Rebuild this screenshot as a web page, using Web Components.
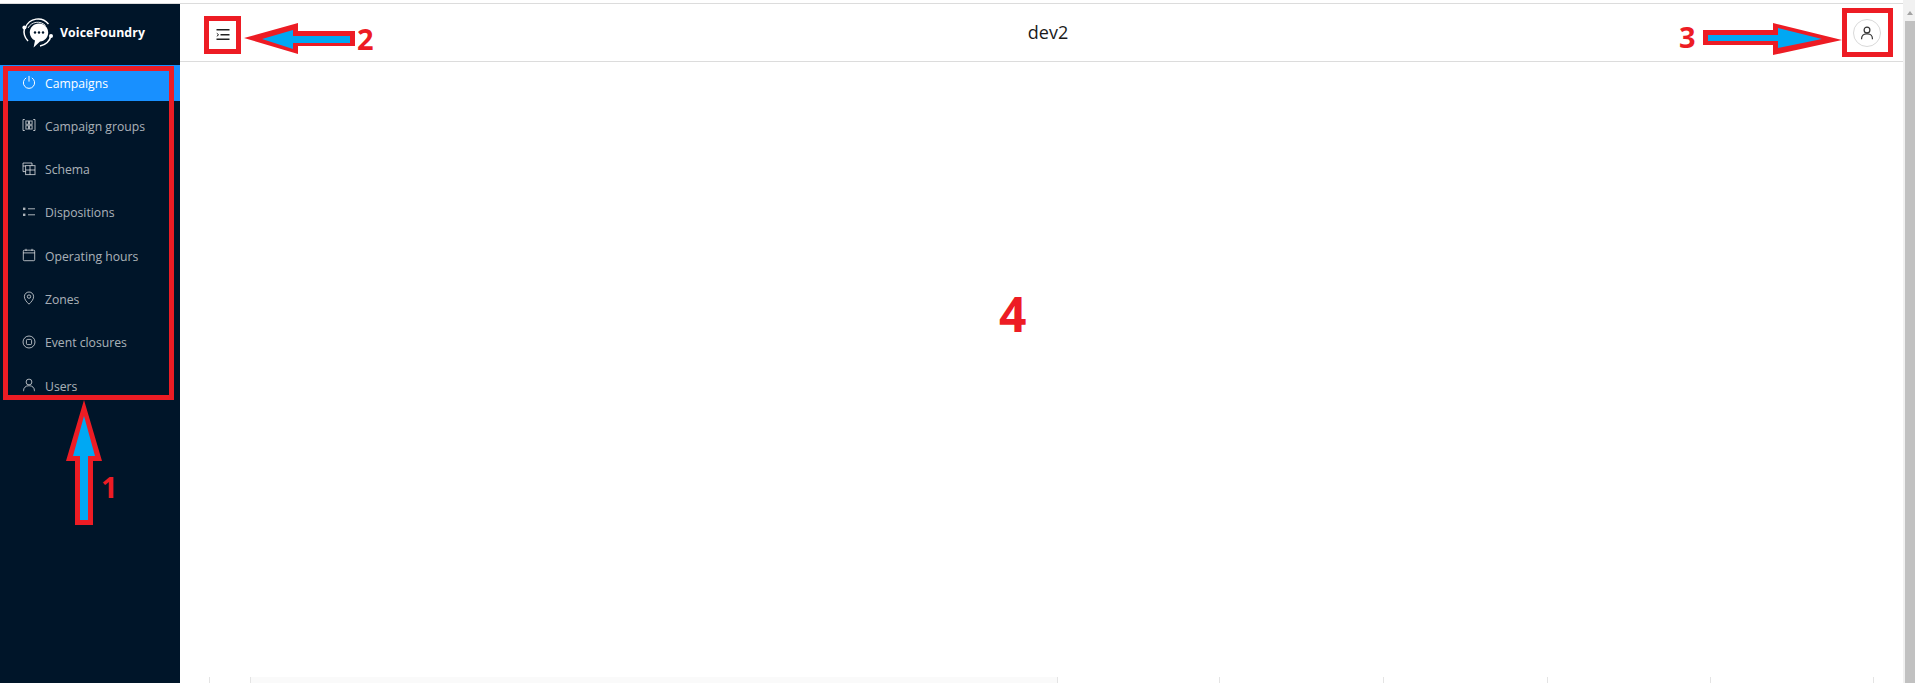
<!DOCTYPE html>
<html lang="en">
<head>
<meta charset="utf-8">
<title>VoiceFoundry</title>
<style>
html,body{margin:0;padding:0;height:683px;overflow:hidden;background:#fff;font-family:"Open Sans","Liberation Sans",sans-serif}
</style>
</head>
<body>
<vf-app>
  <vf-sidebar slot="sidebar">
    <vf-item label="Campaigns" icon="power" active></vf-item>
    <vf-item label="Campaign groups" icon="group"></vf-item>
    <vf-item label="Schema" icon="schema"></vf-item>
    <vf-item label="Dispositions" icon="list"></vf-item>
    <vf-item label="Operating hours" icon="calendar"></vf-item>
    <vf-item label="Zones" icon="pin"></vf-item>
    <vf-item label="Event closures" icon="target"></vf-item>
    <vf-item label="Users" icon="user"></vf-item>
  </vf-sidebar>
  <vf-header slot="header" title="dev2"></vf-header>
  <vf-table-edge slot="content"></vf-table-edge>
</vf-app>
<vf-annotations></vf-annotations>
<script>
const ICONS = {
  power:'<path d="M4.2 2.9A5.6 5.6 0 1 0 9.8 2.9M7 .9V6.6"/>',
  group:'<path d="M2.8 1.5H1v11h1.8M11.2 1.5H13v11h-1.8"/><rect x="3.9" y="3" width="2.6" height="3.3"/><rect x="7.5" y="3" width="2.6" height="3.3"/><rect x="3.9" y="7.7" width="2.6" height="3.3"/><rect x="7.5" y="7.7" width="2.6" height="3.3"/>',
  schema:'<path d="M3.6 9.6H1V1h9v2.6"/><rect x="3.6" y="3.6" width="9.4" height="9"/><path d="M3.6 8H13M8 3.6V12.6M1 4H3.6"/>',
  list:'<rect x="1" y="2.6" width="2.4" height="2.4" fill="currentColor" stroke="none"/><rect x="1" y="8.6" width="2.4" height="2.4" fill="currentColor" stroke="none"/><path d="M6 3.8H13M6 9.8H13"/>',
  calendar:'<rect x="1.3" y="2.2" width="11.4" height="10.5" rx="1"/><path d="M1.3 4.9H12.7M4 .8V3M10 .8V3"/>',
  pin:'<path d="M7 13.2C4.6 10.8 2.4 8.5 2.4 5.6a4.6 4.6 0 0 1 9.2 0C11.6 8.5 9.4 10.8 7 13.2Z"/><circle cx="7" cy="5.6" r="1.7"/>',
  target:'<circle cx="7" cy="7" r="6"/><rect x="4.4" y="4.4" width="5.2" height="5.2" rx="1.2"/>',
  user:'<circle cx="7" cy="4" r="2.9"/><path d="M1.6 13.2V12.4A4.6 4.6 0 0 1 6.2 7.8H7.8A4.6 4.6 0 0 1 12.4 12.4V13.2"/>'
};

class VfApp extends HTMLElement {
  constructor(){
    super();
    this.attachShadow({mode:'open'}).innerHTML = `
    <style>
      :host{display:flex;width:1915px;height:683px;background:#fff}
      .left{flex:1;min-width:0;display:flex;flex-direction:column}
      .strip{height:3px;border-bottom:1px solid #dcdcdc;flex:none}
      .body{flex:1;min-height:0;display:flex}
      .main{flex:1;min-width:0;display:flex;flex-direction:column}
      .content{flex:1;display:flex;flex-direction:column;justify-content:flex-end}
    </style>
    <div class="left">
      <div class="strip"></div>
      <div class="body">
        <slot name="sidebar"></slot>
        <div class="main">
          <slot name="header"></slot>
          <div class="content"><slot name="content"></slot></div>
        </div>
      </div>
    </div>
    <vf-scrollbar></vf-scrollbar>`;
  }
}

class VfScrollbar extends HTMLElement {
  constructor(){
    super();
    this.attachShadow({mode:'open'}).innerHTML = `
    <style>
      :host{display:flex;flex-direction:column;flex:none;width:12px;background:#f1f1f1;box-sizing:border-box;padding-left:2px}
      .btn{height:21px;flex:none;display:flex;justify-content:center;padding-top:11px;box-sizing:border-box}
      .tri{width:0;height:0;border-left:3.5px solid transparent;border-right:3.5px solid transparent;border-bottom:4px solid #a3a3a3}
      .thumb{flex:1;background:#c1c1c1}
    </style>
    <div class="btn"><div class="tri"></div></div><div class="thumb"></div>`;
  }
}

class VfSidebar extends HTMLElement {
  constructor(){
    super();
    this.attachShadow({mode:'open'}).innerHTML = `
    <style>
      :host{display:flex;flex-direction:column;flex:none;width:180px;background:#001529;color:rgba(255,255,255,.65)}
      .logo{height:61px;flex:none;display:flex;align-items:center;padding-left:21px;gap:6px;box-sizing:border-box;color:#fff;font:700 12.300px "Open Sans","Liberation Sans",sans-serif}
      .logo svg{flex:none;margin-top:-2px}
      .logo span{margin-top:-4px;letter-spacing:.1px}
      nav{display:flex;flex-direction:column;gap:7.300px}
    </style>
    <div class="logo">
      <svg width="33" height="32" viewBox="0 0 33 32" fill="none">
        <path d="M4.500 9.500A13.500 13.500 0 0 1 27.500 6" stroke="#fff" stroke-width="1.300"/>
        <path d="M7 10A11 11 0 0 1 24.500 7.500" stroke="#fff" stroke-width=".9"/>
        <path d="M30 17.500A13.500 13.500 0 0 1 19 28" stroke="#fff" stroke-width="1.700"/>
        <path d="M3.500 10A14 14 0 0 0 7 23" stroke="#fff" stroke-width="1.500"/>
        <circle cx="3.400" cy="9.600" r="2" fill="#fff"/>
        <circle cx="30" cy="18" r="2" fill="#fff"/>
        <path d="M18 5.500C12.600 5.500 8.800 9.500 8.800 14.500c0 3.600 2 6.600 5.200 8L12.600 29.500l6.400-6C23.600 23.200 27.200 19.400 27.200 14.500 27.200 9.500 23.400 5.500 18 5.500Z" fill="#fff"/>
        <circle cx="14" cy="14.500" r="1.200" fill="#001529"/>
        <circle cx="18" cy="14.500" r="1.200" fill="#001529"/>
        <circle cx="22" cy="14.500" r="1.200" fill="#001529"/>
      </svg>
      <span>VoiceFoundry</span>
    </div>
    <nav><slot></slot></nav>`;
  }
}

class VfItem extends HTMLElement {
  constructor(){
    super();
    const icon = ICONS[this.getAttribute('icon')] || '';
    this.attachShadow({mode:'open'}).innerHTML = `
    <style>
      :host{display:flex;align-items:center;height:36px;padding-left:22px;gap:9px;font:12.200px "Open Sans","Liberation Sans",sans-serif;color:rgba(255,255,255,.68);box-sizing:border-box}
      :host([active]){background:#1890ff;color:#fff}
      svg{flex:none;margin-top:-2px}
    </style>
    <svg width="14" height="14" viewBox="0 0 14 14" fill="none" stroke="currentColor" stroke-width="1">${icon}</svg>
    <span>${this.getAttribute('label')}</span>`;
  }
}

class VfHeader extends HTMLElement {
  constructor(){
    super();
    this.attachShadow({mode:'open'}).innerHTML = `
    <style>
      :host{display:grid;grid-template-columns:63px 1fr 50px;align-items:center;height:58px;box-sizing:border-box;border-bottom:1px solid #dcdcdc;background:#fff;flex:none}
      .toggle{padding-left:36px;display:flex;margin-top:5px}
      .title{text-align:center;font:18px "Open Sans","Liberation Sans",sans-serif;color:#1a1a1a;margin-top:-1px}
      .avatar{width:28px;height:28px;box-sizing:border-box;border:1px solid #d9d9d9;border-radius:50%;display:flex;align-items:center;justify-content:center;color:#333;margin-top:1px}
    </style>
    <div class="toggle">
      <svg width="14" height="14" viewBox="0 0 14 14" fill="none" stroke="#222" stroke-width="1.400">
        <path d="M.5 1.800H13.500M4.500 6.800H13.500M.5 11.200H13.500"/>
        <path d="M.8 5.300 2.600 6.800 .8 8.300" stroke-width="1"/>
      </svg>
    </div>
    <div class="title">${this.getAttribute('title')}</div>
    <div class="avatar">
      <svg width="14" height="14" viewBox="0 0 14 14" fill="none" stroke="currentColor" stroke-width="1.200">${ICONS.user}</svg>
    </div>`;
  }
}

class VfTableEdge extends HTMLElement {
  constructor(){
    super();
    const cols = [41,807,162,164,164,163,163,30];
    this.attachShadow({mode:'open'}).innerHTML = `
    <style>
      :host{display:grid;grid-template-columns:${cols.map(c=>c+'px').join(' ')};margin-left:29px;height:6px;flex:none}
      div{border-left:1px solid #e4e4e4;box-sizing:border-box}
      .band{background:#fafafa}
    </style>
    ${cols.map((c,i)=>`<div class="${i===1?'band':''}"></div>`).join('')}`;
  }
}

class VfAnnotations extends HTMLElement {
  constructor(){
    super();
    const R='#ed1c24', B='#00a8f3';
    this.attachShadow({mode:'open'}).innerHTML = `
    <style>
      :host{position:absolute;left:0;top:0;width:1915px;height:683px;pointer-events:none;display:block}
      svg{position:absolute;left:0;top:0}
      span{position:absolute;font:700 29px/1 "Open Sans","Liberation Sans",sans-serif;color:${R}}
      .big{font-size:48px}
    </style>
    <svg width="1915" height="683" fill="none">
      <rect x="5.500" y="68.500" width="166" height="329" stroke="${R}" stroke-width="5"/>
      <rect x="206.500" y="18.500" width="32" height="33" stroke="${R}" stroke-width="5"/>
      <rect x="1844.500" y="10.500" width="46" height="44" stroke="${R}" stroke-width="5"/>
      <polygon fill="${R}" points="244,38 298,23 298,31 355,31 355,46 298,46 298,54"/>
      <polygon fill="${B}" points="262,39 293,30 293,36 350,36 350,43 293,43 293,49"/>
      <polygon fill="${R}" points="1842,40 1773,23 1773,30 1703,30 1703,45 1773,45 1773,55"/>
      <polygon fill="${B}" points="1822,39 1778,28 1778,35 1708,35 1708,41 1778,41 1778,48"/>
      <polygon fill="${R}" points="84,400 102,461 93,461 93,525 75,525 75,461 66,461"/>
      <polygon fill="${B}" points="84,416 95,456 88,456 88,520 80,520 80,456 73,456"/>
    </svg>
    <span style="left:357px;top:24px">2</span>
    <span style="left:1679px;top:22px">3</span>
    <span style="left:101px;top:472px">1</span>
    <span class="big" style="left:999px;top:290px">4</span>`;
  }
}

customElements.define('vf-scrollbar', VfScrollbar);
customElements.define('vf-app', VfApp);
customElements.define('vf-sidebar', VfSidebar);
customElements.define('vf-item', VfItem);
customElements.define('vf-header', VfHeader);
customElements.define('vf-table-edge', VfTableEdge);
customElements.define('vf-annotations', VfAnnotations);
</script>
</body>
</html>
